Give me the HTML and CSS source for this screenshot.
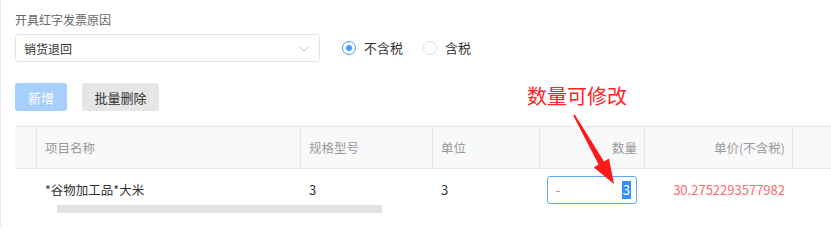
FILE: index.html
```html
<!DOCTYPE html>
<html lang="zh">
<head>
<meta charset="utf-8">
<link rel="stylesheet" href="styles.css">
</head>
<body>
<div class="page">
  <div class="field-label">开具红字发票原因</div>
  <div class="top-row">
    <div class="select">
      <span>销货退回</span>
      <svg class="chev" width="10" height="6" viewBox="0 0 10 6"><path d="M1 1 L5 5 L9 1" fill="none" stroke="#b8bcc4" stroke-width="1"/></svg>
    </div>
    <div class="radios">
      <label class="radio"><span class="dot checked"></span>不含税</label>
      <label class="radio"><span class="dot"></span>含税</label>
    </div>
  </div>
  <div class="toolbar">
    <button class="btn btn-primary">新增</button>
    <button class="btn btn-gray">批量删除</button>
  </div>
  <div class="table">
    <div class="thead">
      <div class="th c0"></div>
      <div class="th c1">项目名称</div>
      <div class="th c2">规格型号</div>
      <div class="th c3">单位</div>
      <div class="th c4 right">数量</div>
      <div class="th c5 right">单价(不含税)</div>
      <div class="th c6"></div>
    </div>
    <div class="trow">
      <div class="td c0"></div>
      <div class="td c1 name">*谷物加工品*大米</div>
      <div class="td c2">3</div>
      <div class="td c3">3</div>
      <div class="td c4"><div class="qty"><span class="minus">-</span><span class="sel">3</span></div></div>
      <div class="td c5 right price">30.2752293577982</div>
      <div class="td c6"></div>
    </div>
    <div class="scrollbar"></div>
  </div>
  <div class="annot">数量可修改</div>
  <svg class="arrow" width="831" height="227" viewBox="0 0 831 227">
    <polygon points="572.2,115.6 573.8,114.4 603,161.5 608,158.5 613,184 592.8,167.5 597.6,164.6" fill="#ff1a1a"/>
  </svg>
</div>
</body>
</html>
```
FILE: styles.css
```css
* { box-sizing: border-box; }
html, body { margin: 0; padding: 0; background: #fff; }
body {
  font-family: "Noto Sans CJK SC", "Noto Sans", sans-serif;
  font-size: 12px;
  color: #333;
  overflow: hidden;
}
.page {
  position: relative;
  width: 831px;
  height: 227px;
  padding: 10px 0 0 15px;
  border-left: 1px solid #ececec;
}
.field-label {
  line-height: 20px;
  color: #666;
  margin-left: -1px;
}
.top-row {
  display: flex;
  margin-top: 4px;
}
.select {
  width: 305px;
  height: 28px;
  margin-left: -1px;
  border: 1px solid #e2e4e8;
  border-radius: 3px;
  display: flex;
  align-items: center;
  justify-content: space-between;
  padding: 0 10px 0 8px;
  color: #333;
}
.chev { margin-top: 1px; }
.radios {
  display: flex;
  gap: 20px;
  margin-left: 22px;
  line-height: 20px;
}
.radio {
  display: flex;
  align-items: center;
  gap: 8px;
  color: #333;
  font-size: 13px;
}
.dot {
  width: 14px;
  height: 14px;
  border-radius: 50%;
  border: 1px solid #dcdfe6;
  background: #fff;
  position: relative;
}
.dot.checked { border-color: #409eff; }
.dot.checked::after {
  content: "";
  position: absolute;
  left: 3px; top: 3px;
  width: 6px; height: 6px;
  border-radius: 50%;
  background: #409eff;
}
.toolbar {
  display: flex;
  gap: 15px;
  margin-top: 21px;
  margin-left: -1px;
}
.btn {
  height: 28px;
  border: none;
  border-radius: 3px;
  font-family: inherit;
  font-size: 13px;
  padding: 0;
}
.btn-primary { width: 52px; background: #a6d0fb; color: #fff; }
.btn-gray { width: 77px; background: #e6e6e6; color: #333; }
.table {
  margin-top: 15px;
  margin-left: -1px;
}
.thead, .trow {
  display: grid;
  grid-template-columns: 21px 264px 132px 107px 105px 148px 60px;
}
.thead {
  height: 43px;
  background: #f8f9fb;
  border-top: 1px solid #e4e6ea;
  border-bottom: 1px solid #e4e6ea;
  color: #999;
  font-size: 12.5px;
}
.th {
  line-height: 41px;
  padding: 0 7px 0 8px;
  white-space: nowrap;
}
.th + .th { border-left: 1px solid #e4e6ea; }
.right { text-align: right; }
.trow { height: 35px; font-size: 13px; }
.td {
  padding: 7px 7px 0 9px;
  line-height: 28px;
  white-space: nowrap;
  color: #333;
}
.td.name { font-size: 12.5px; }
.td.c4 { padding-left: 8px; }
.qty {
  width: 90px;
  height: 28px;
  border: 1px solid #5ea9f5;
  border-radius: 3px;
  display: flex;
  justify-content: space-between;
  align-items: center;
  padding: 0 5px 0 8px;
  line-height: 18px;
}
.minus { color: #f56c6c; }
.sel { background: #3390ff; color: #fff; padding: 0 1px; }
.price { color: #f56c6c; }
.scrollbar {
  margin: 1px 0 0 42px;
  width: 325px;
  height: 8px;
  background: #e2e2e2;
}
.annot {
  position: absolute;
  left: 526px;
  top: 83px;
  font-size: 20px;
  line-height: 26px;
  color: #ff2424;
}
.arrow {
  position: absolute;
  left: 0;
  top: 0;
  pointer-events: none;
}
```
